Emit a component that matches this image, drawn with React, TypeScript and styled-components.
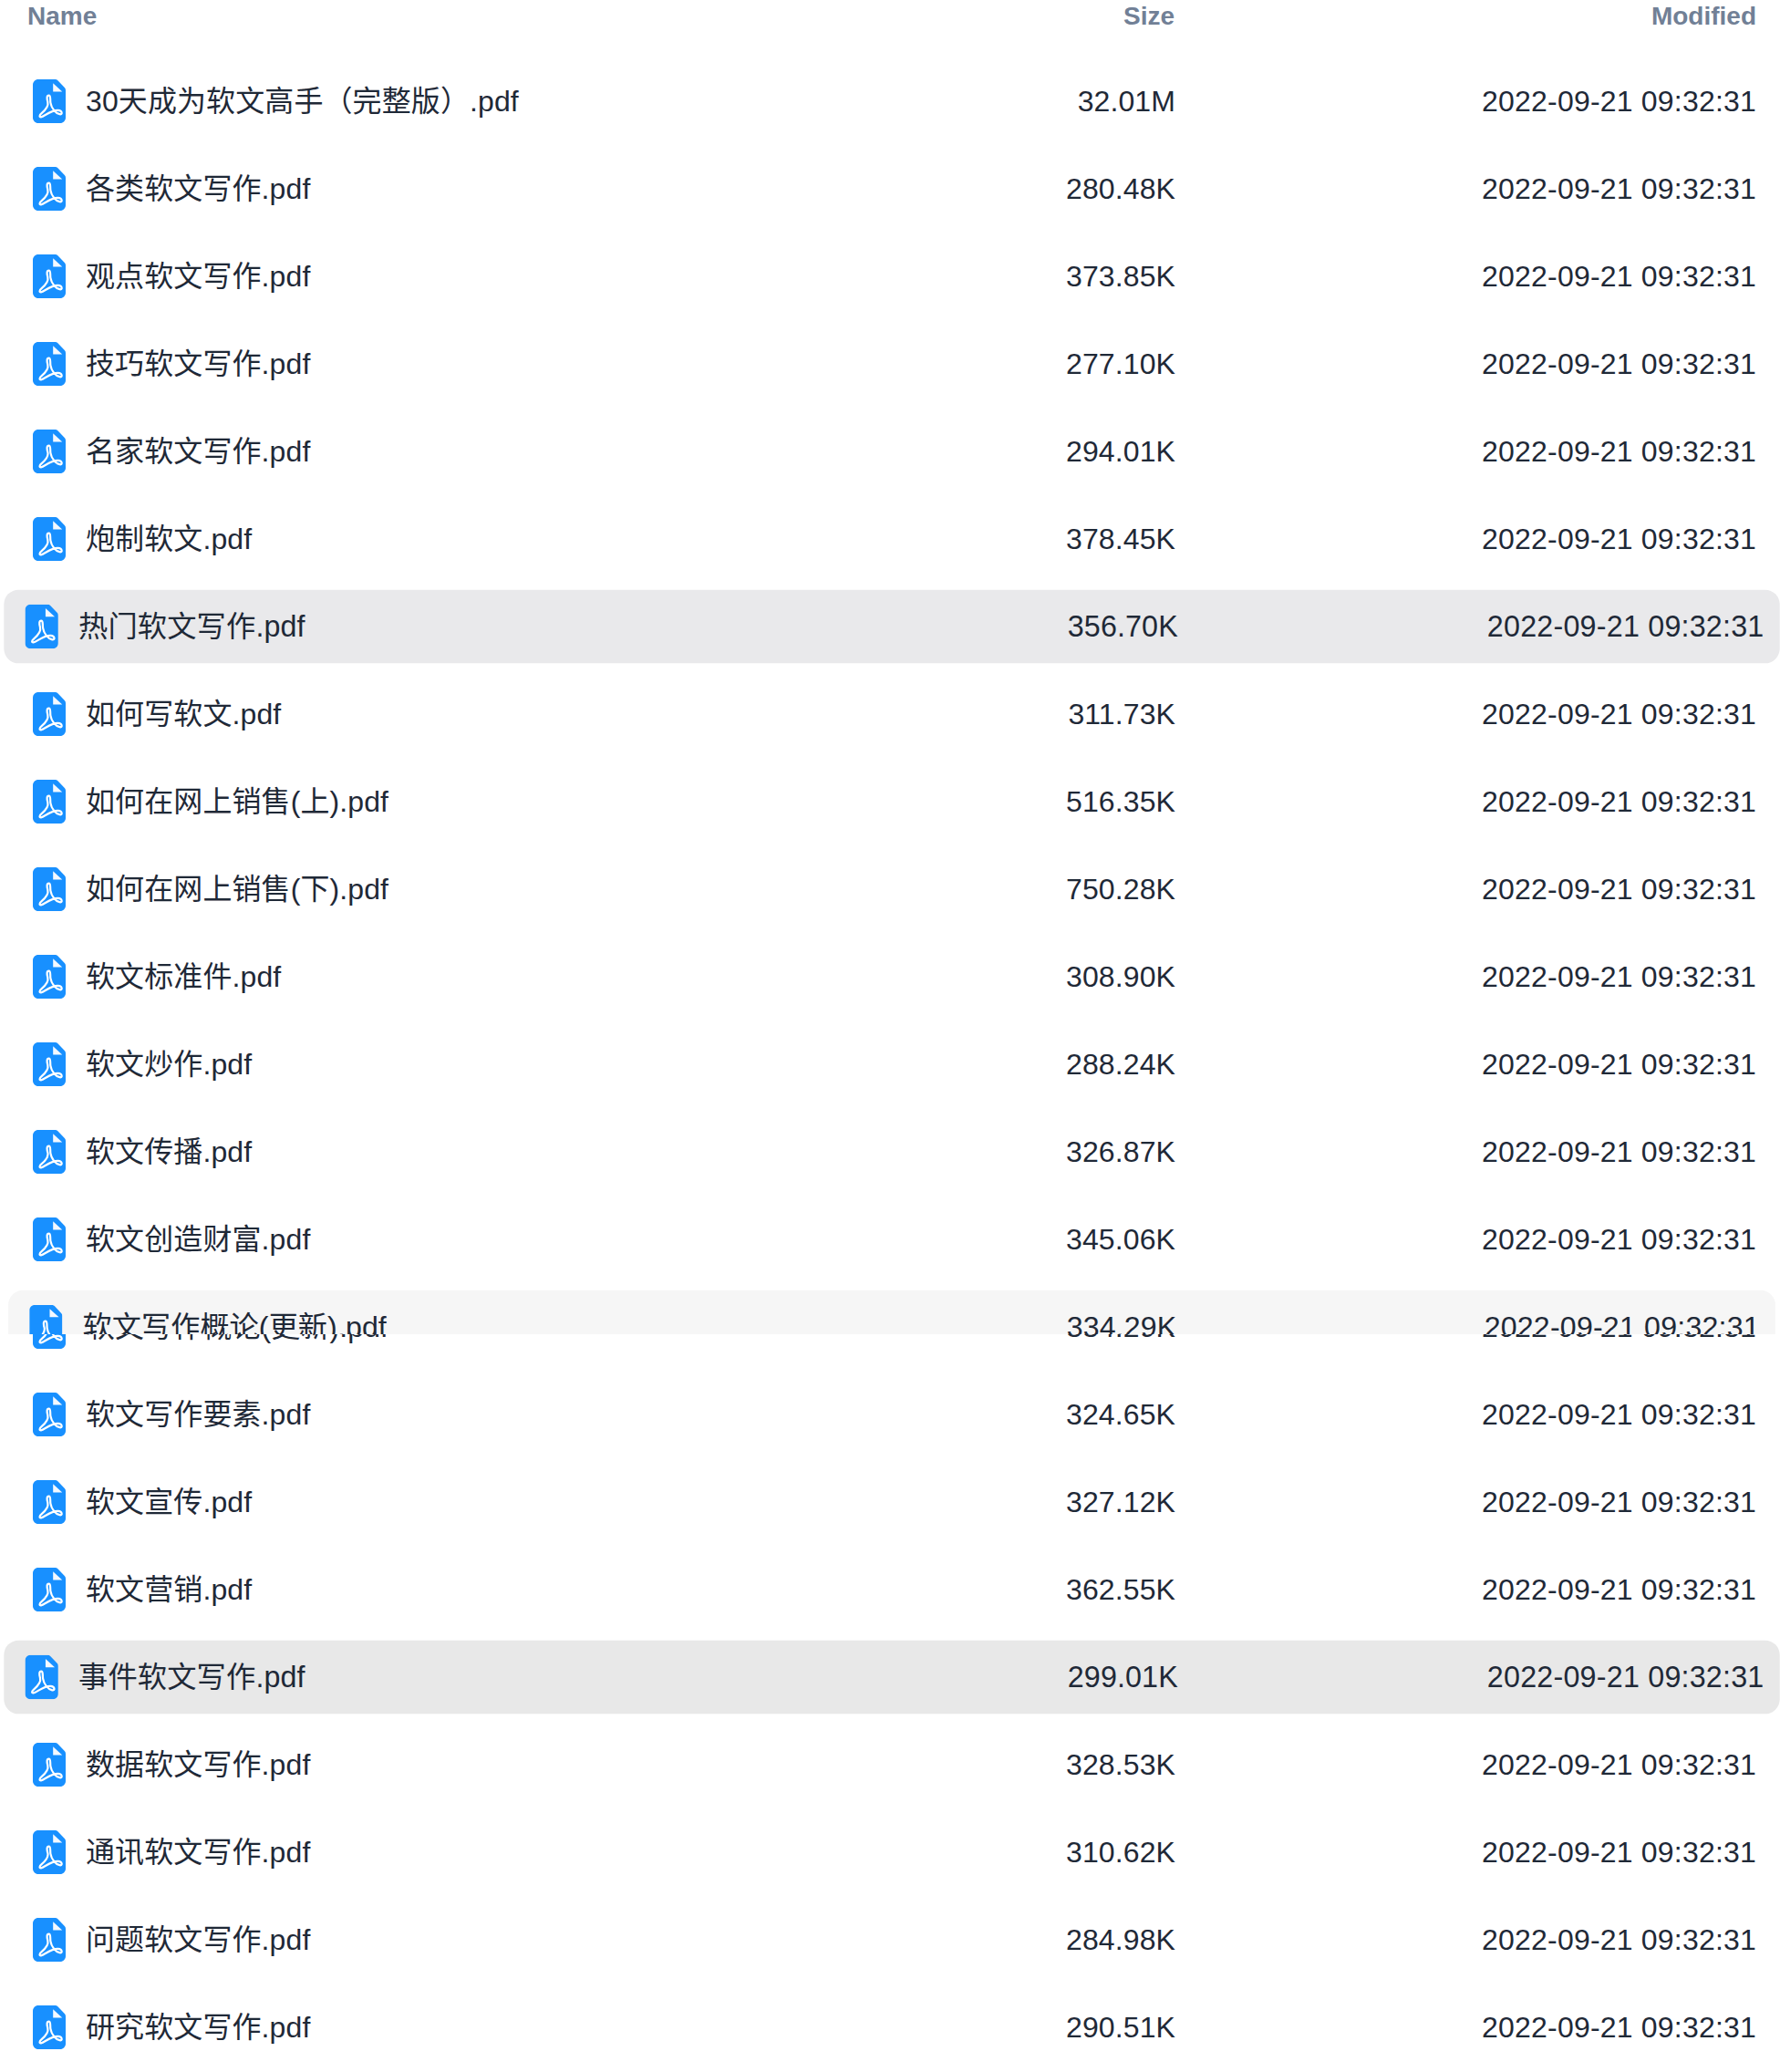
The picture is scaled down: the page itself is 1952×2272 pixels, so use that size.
import React from "react";
import styled, { createGlobalStyle } from "styled-components";

const Global = createGlobalStyle`
  html, body { margin: 0; padding: 0; background: #fff; }
  body { font-family: "Liberation Sans", "Noto Sans CJK SC", sans-serif; }
`;

const Page = styled.div`
  width: 1952px;
  height: 2272px;
  box-sizing: border-box;
  overflow: hidden;
  padding: 0 9px 9px 13px;
`;

const Header = styled.div`
  display: grid;
  grid-template-columns: 1fr 360px 638px;
  align-items: center;
  height: 35px;
  margin-bottom: 36px;
  padding: 0 17px 0 17px;
  font-size: 28px;
  font-weight: 700;
  color: #718096;
`;

const HeadCell = styled.div<{ $right?: boolean }>`
  text-align: ${(p) => (p.$right ? "right" : "left")};
`;

const List = styled.div`
  display: flex;
  flex-direction: column;
  gap: 16px;
`;

const RowWrap = styled.div`
  position: relative;
  height: 80px;
`;

const RowBody = styled.div<{ $bg?: string; $scale?: number }>`
  display: grid;
  grid-template-columns: 1fr 360px 637px;
  align-items: center;
  height: 80px;
  box-sizing: border-box;
  padding: 0 17px 0 23px;
  border-radius: 16px;
  font-size: 32px;
  line-height: 40px;
  letter-spacing: 0.1px;
  color: #1f2937;
  background: ${(p) => p.$bg ?? "transparent"};
  ${(p) => (p.$scale ? `transform: scale(${p.$scale});` : "")}
`;

const GhostTop = styled.div`
  position: absolute;
  inset: 0;
  clip-path: inset(-10px -20px 32px -20px);
`;

const NameCell = styled.div`
  display: flex;
  align-items: center;
  gap: 22px;
  white-space: nowrap;
`;

const SizeCell = styled.div`
  text-align: right;
`;

const DateCell = styled.div`
  text-align: right;
  letter-spacing: 0.2px;
`;

const IconSvg = styled.svg`
  width: 36px;
  height: 48px;
  flex: none;
  display: block;
`;

const PdfIcon = () => (
  <IconSvg viewBox="0 0 36 48" aria-hidden="true">
    <path
      d="M6 0H24.5C25.6 0 26.6 .4 27.4 1.2L34.8 9C35.6 9.8 36 10.8 36 11.9V42C36 45.3 33.3 48 30 48H6C2.7 48 0 45.3 0 42V6C0 2.7 2.7 0 6 0Z"
      fill="#1890ff"
    />
    <path d="M22.2 4.3L32.2 13.4H22.2Z" fill="#f4f9ff" />
    <path
      d="M17.5 17.6C15.2 17.6 15.2 20.8 16.3 24.8C17.3 28.6 13.8 33.8 9.4 37.4C7 39.4 7 41.6 9 41.3C12.6 40.7 20 33.4 27.6 33.8C32.6 34.1 32.8 38.9 29.4 38.2C24.8 37.2 20.4 31.6 19.4 25.6C18.8 21.6 19.9 17.6 17.5 17.6Z"
      fill="none"
      stroke="#fff"
      strokeWidth="2.2"
      strokeLinejoin="round"
    />
  </IconSvg>
);

type FileRow = { name: string; size: string };

const files: FileRow[] = [
  { name: "30天成为软文高手（完整版）.pdf", size: "32.01M" },
  { name: "各类软文写作.pdf", size: "280.48K" },
  { name: "观点软文写作.pdf", size: "373.85K" },
  { name: "技巧软文写作.pdf", size: "277.10K" },
  { name: "名家软文写作.pdf", size: "294.01K" },
  { name: "炮制软文.pdf", size: "378.45K" },
  { name: "热门软文写作.pdf", size: "356.70K" },
  { name: "如何写软文.pdf", size: "311.73K" },
  { name: "如何在网上销售(上).pdf", size: "516.35K" },
  { name: "如何在网上销售(下).pdf", size: "750.28K" },
  { name: "软文标准件.pdf", size: "308.90K" },
  { name: "软文炒作.pdf", size: "288.24K" },
  { name: "软文传播.pdf", size: "326.87K" },
  { name: "软文创造财富.pdf", size: "345.06K" },
  { name: "软文写作概论(更新).pdf", size: "334.29K" },
  { name: "软文写作要素.pdf", size: "324.65K" },
  { name: "软文宣传.pdf", size: "327.12K" },
  { name: "软文营销.pdf", size: "362.55K" },
  { name: "事件软文写作.pdf", size: "299.01K" },
  { name: "数据软文写作.pdf", size: "328.53K" },
  { name: "通讯软文写作.pdf", size: "310.62K" },
  { name: "问题软文写作.pdf", size: "284.98K" },
  { name: "研究软文写作.pdf", size: "290.51K" },
];

const MODIFIED = "2022-09-21 09:32:31";

const RowContent = ({ file }: { file: FileRow }) => (
  <>
    <NameCell>
      <PdfIcon />
      {file.name}
    </NameCell>
    <SizeCell>{file.size}</SizeCell>
    <DateCell>{MODIFIED}</DateCell>
  </>
);

const highlights: Record<number, string> = { 6: "#e9e9eb", 18: "#e8e8e8" };

export default function App() {
  return (
    <Page>
      <Global />
      <Header>
        <HeadCell>Name</HeadCell>
        <HeadCell $right>Size</HeadCell>
        <HeadCell $right>Modified</HeadCell>
      </Header>
      <List>
        {files.map((file, i) => (
          <RowWrap key={file.name}>
            <RowBody $bg={highlights[i]} $scale={highlights[i] ? 1.009 : undefined}>
              <RowContent file={file} />
            </RowBody>
            {i === 14 && (
              <GhostTop>
                <RowBody $bg="#f6f6f6" $scale={1.004}>
                  <RowContent file={file} />
                </RowBody>
              </GhostTop>
            )}
          </RowWrap>
        ))}
      </List>
    </Page>
  );
}
